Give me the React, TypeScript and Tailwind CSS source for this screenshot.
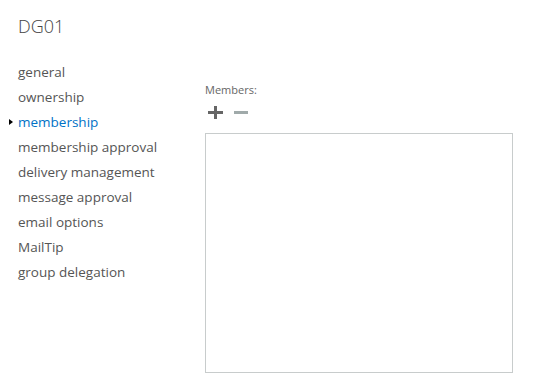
import { useState } from 'react';

const sections = [
  'general',
  'ownership',
  'membership',
  'membership approval',
  'delivery management',
  'message approval',
  'email options',
  'MailTip',
  'group delegation',
];

export default function App() {
  const [active, setActive] = useState('membership');

  return (
    <div className="flex h-[381px] w-[538px] overflow-hidden bg-white font-['Segoe_UI','Open_Sans',sans-serif] text-[#333]">
      <div className="w-[205px] shrink-0 pl-[18px] pt-[14px]">
        <h1 className="text-[18px] font-light leading-[24px] text-[#444]">DG01</h1>
        <ul className="mt-[22px]">
          {sections.map(name => (
            <li
              key={name}
              onClick={() => setActive(name)}
              className={`relative cursor-pointer text-[13.5px] leading-[25px] ${
                active === name ? 'text-[#0072c6]' : 'text-[#555]'
              }`}
            >
              {active === name && (
                <span className="absolute left-[-9px] top-[8.5px] h-0 w-0 border-y-[3.5px] border-l-[4px] border-y-transparent border-l-black" />
              )}
              {name}
            </li>
          ))}
        </ul>
      </div>

      <div className="flex-1 pt-[82px]">
        <div className="text-[11px] leading-[16px] text-[#666]">Members:</div>
        <div className="mt-[8px] flex items-center gap-[11px] pl-[3px]">
          <button className="relative h-[13px] w-[15px]">
            <span className="absolute left-0 top-[5px] h-[3px] w-[15px] bg-[#666]" />
            <span className="absolute left-[6px] top-0 h-[13px] w-[3px] bg-[#666]" />
          </button>
          <button className="h-[3px] w-[14px] bg-[#a0aaaa]" />
        </div>
        <div className="mt-[14px] h-[240px] w-[308px] border border-[#c8cccc] bg-white" />
      </div>
    </div>
  );
}
